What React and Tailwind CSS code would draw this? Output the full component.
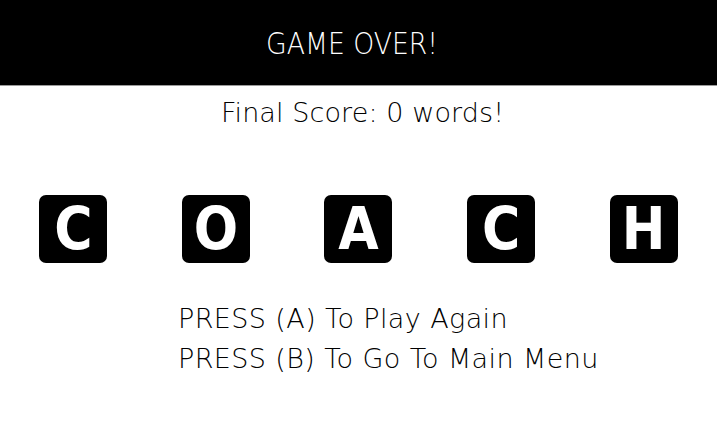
export default function App() {
  const letters = ["C", "O", "A", "C", "H"];
  return (
    <div className="w-[717px] h-[430px] bg-white overflow-hidden flex flex-col">
      <div className="h-[86px] bg-black border-b border-[#9a9a9a] flex items-center justify-center">
        <span className="text-white text-[31px] leading-none font-extralight scale-x-[0.86] pt-[2px] mr-[12px] font-['DejaVu_Sans',sans-serif]">
          GAME OVER!
        </span>
      </div>
      <div className="mt-[11px] text-center text-black text-[27px] leading-[32px] font-extralight tracking-[0.1px] pl-[8px] font-['DejaVu_Sans',sans-serif]">
        Final Score: 0 words!
      </div>
      <div className="mt-[66px] flex justify-around px-[2px]">
        {letters.map((l, i) => (
          <div
            key={i}
            className="w-[68px] h-[68px] bg-black rounded-[7px] flex items-center justify-center text-white text-[58px] font-bold leading-none font-['DejaVu_Sans_Condensed','DejaVu_Sans',sans-serif]"
          >
            {l}
          </div>
        ))}
      </div>
      <div className="mt-[36px] pl-[178px] text-black text-[27px] leading-[40px] font-extralight tracking-[0.4px] font-['DejaVu_Sans',sans-serif]">
        <div>PRESS (A) To Play Again</div>
        <div>PRESS (B) To Go To Main Menu</div>
      </div>
    </div>
  );
}
